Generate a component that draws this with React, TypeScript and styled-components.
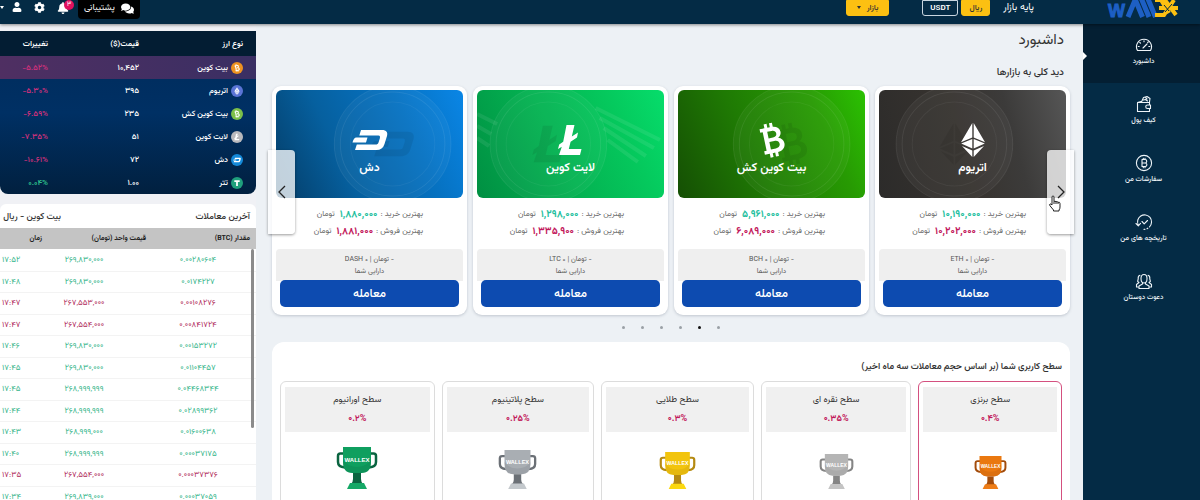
import React from "react";
import styled, { createGlobalStyle, css } from "styled-components";
import { FaBell, FaCog, FaComments, FaUser } from "react-icons/fa";

const GlobalStyle = createGlobalStyle`
  *, *::before, *::after { box-sizing: border-box; }
  body {
    margin: 0;
    background: #edf1f5;
    color: #333;
    font-family: Vazirmatn, "DejaVu Sans Condensed", "Noto Sans", sans-serif;
    font-size: 8px;
    line-height: 12px;
  }
  button { font-family: inherit; cursor: pointer; }
  h1, h2, p, ul { margin: 0; padding: 0; }
`;

const Shell = styled.div`
  height: 100vh;
  display: flex;
  flex-direction: column;
  overflow: hidden;
`;

/* ---------- top bar ---------- */

const TopBar = styled.header`
  position: relative;
  z-index: 2;
  display: flex;
  align-items: flex-start;
  justify-content: space-between;
  height: 24px;
  flex: none;
  background: #042b45;
  box-shadow: 0 1px 3px rgba(0, 0, 0, 0.45);
`;

const BarGroup = styled.div`
  display: flex;
  align-items: flex-start;
`;

const Brand = styled.a`
  display: block;
  height: 18px;
  margin-right: 22px;
  margin-left: 73px;
`;

const BaseLabel = styled.span`
  color: #fff;
  font-size: 10px;
  line-height: 16px;
  margin-left: 13px;
`;

const BarButton = styled.button<{ $outline?: boolean }>`
  height: 16px;
  padding: 0 7px;
  border: 1px solid ${(p) => (p.$outline ? "#c9d6e0" : "#fcc012")};
  border-radius: 0 0 3px 3px;
  background: ${(p) => (p.$outline ? "transparent" : "#fcc012")};
  color: ${(p) => (p.$outline ? "#fff" : "#333")};
  font-size: 8px;
  line-height: 12px;
  font-weight: ${(p) => (p.$outline ? 600 : 500)};
  margin-left: 3px;
`;

const MarketButton = styled(BarButton)`
  margin-right: 30px;
  padding: 0 10px;
`;

const Caret = styled.span`
  display: inline-block;
  border: 2px solid transparent;
  border-top: 3px solid currentColor;
  border-bottom: 0;
  margin-right: 6px;
  vertical-align: middle;
`;

const SupportButton = styled.button`
  display: flex;
  align-items: center;
  gap: 6px;
  height: 19px;
  margin-left: -3px;
  padding: 0 6px 3px 6px;
  border: 0;
  border-radius: 0 0 4px 4px;
  background: #000;
  color: #fff;
  font-size: 9px;
  line-height: 12px;
`;

const IconButton = styled.button`
  position: relative;
  display: flex;
  padding: 2px 0 0;
  border: 0;
  background: none;
  color: #fff;
`;

const Tools = styled(BarGroup)`
  gap: 12px;
`;

const AccountButton = styled(IconButton)`
  gap: 8px;
  align-items: center;
  & > ${Caret} { margin: 0; }
`;

const Badge = styled.span`
  position: absolute;
  top: 0;
  left: 7px;
  width: 10px;
  height: 10px;
  border-radius: 50%;
  background: #e0115f;
  color: #fff;
  font-size: 7px;
  line-height: 10px;
  text-align: center;
`;

/* ---------- page columns ---------- */

const Columns = styled.div`
  flex: 1;
  min-height: 0;
  display: grid;
  grid-template-columns: 117px minmax(0, 1fr) 256px;
`;

const SideNav = styled.nav`
  background: #042b45;
`;

const NavLink = styled.a<{ $active?: boolean }>`
  position: relative;
  display: flex;
  flex-direction: column;
  align-items: center;
  gap: 2px;
  height: 59px;
  padding: 12px 0 0 4px;
  color: #eef4f8;
  font-size: 7px;
  font-weight: 500;
  line-height: 12px;
  text-decoration: none;
  background: ${(p) => (p.$active ? "#041f33" : "transparent")};
  ${(p) =>
    p.$active &&
    css`
      &::before {
        content: "";
        position: absolute;
        left: 0;
        top: 28px;
        border: 4px solid transparent;
        border-left-color: #fff;
        border-right: 0;
      }
    `}
`;

const Main = styled.main`
  padding: 7px 13px 0 16px;
  overflow: hidden;
`;

const Title = styled.h1`
  padding-right: 6px;
  color: #333;
  font-size: 15px;
  font-weight: 400;
  line-height: 20px;
`;

const Section = styled.h2`
  padding-right: 6px;
  color: #333;
  font-size: 10px;
  font-weight: 500;
  line-height: 12px;
  margin-top: 16px;
`;

/* ---------- market slider ---------- */

const Slider = styled.div`
  position: relative;
  display: grid;
  grid-template-columns: repeat(4, minmax(0, 1fr));
  gap: 6px;
  margin-top: 7px;
`;

const MarketCard = styled.article`
  padding: 4px 4px 8px;
  border-radius: 9px;
  background: #fff;
  box-shadow: 0 1px 3px rgba(80, 90, 110, 0.28);
`;

const Cover = styled.div<{ $bg: string }>`
  position: relative;
  display: flex;
  flex-direction: column;
  align-items: center;
  gap: 2px;
  height: 108px;
  padding-top: 32px;
  border-radius: 6px;
  overflow: hidden;
  background: ${(p) => p.$bg};
  color: #fff;
  font-size: 12px;
  font-weight: 600;
  line-height: 16px;
`;

const CoverArt = styled.svg`
  position: absolute;
  inset: 0;
  width: 100%;
  height: 100%;
`;

const Layer = styled.span`
  position: relative;
  display: flex;
`;

const Prices = styled.div`
  padding: 8px 40px 0 0;
`;

const PriceLine = styled.p`
  display: flex;
  gap: 3px;
  color: #666;
  font-size: 8px;
  line-height: 17px;
  white-space: nowrap;
`;

const Amount = styled.strong<{ $up?: boolean }>`
  color: ${(p) => (p.$up ? "#1fbfa0" : "#c2185b")};
  font-size: 10px;
  font-weight: 700;
  margin-left: 2px;
`;

const Asset = styled.div`
  margin-top: 9px;
  padding: 5px 0 3px;
  border-radius: 4px 4px 0 0;
  background: #efefef;
  color: #555;
  font-size: 7px;
  line-height: 12px;
  text-align: center;
`;

const TradeButton = styled.button`
  position: relative;
  display: block;
  width: calc(100% - 8px);
  height: 27px;
  margin: -1px 4px 0;
  border: 0;
  border-radius: 5px;
  background: #0d4bb0;
  color: #fff;
  font-size: 12px;
  font-weight: 500;
  line-height: 24px;
`;

const Arrow = styled.button<{ $side: "left" | "right" }>`
  position: absolute;
  top: 64px;
  ${(p) => p.$side}: -4px;
  display: flex;
  align-items: center;
  justify-content: center;
  width: 27px;
  height: 84px;
  padding: 0;
  border: 0;
  border-radius: ${(p) => (p.$side === "left" ? "0 4px 4px 0" : "4px 0 0 4px")};
  background: rgba(255, 255, 255, 0.76);
  box-shadow: 0 1px 3px rgba(0, 0, 0, 0.4);
`;

const Pointer = styled.svg`
  position: absolute;
  right: 8px;
  top: 109px;
`;

const Dots = styled.div`
  display: flex;
  justify-content: center;
  gap: 16px;
  margin: 11px 0 13px;
`;

const Dot = styled.button<{ $on?: boolean }>`
  width: 3px;
  height: 3px;
  padding: 0;
  border: 0;
  border-radius: 50%;
  background: ${(p) => (p.$on ? "#111" : "#9aa0a6")};
`;

/* ---------- user levels ---------- */

const Levels = styled.section`
  padding: 19px 8px 0;
  border-radius: 12px;
  background: #fff;
`;

const LevelsTitle = styled.h2`
  color: #333;
  font-size: 9px;
  font-weight: 600;
  line-height: 12px;
`;

const LevelGrid = styled.div`
  display: grid;
  grid-template-columns: 144fr 151fr 153fr 153fr 155fr;
  gap: 7px;
  margin-top: 8px;
`;

const LevelCard = styled.article<{ $current?: boolean }>`
  display: flex;
  flex-direction: column;
  height: 150px;
  padding: 5px 4px;
  border: 1px solid ${(p) => (p.$current ? "#d4507f" : "#dcdcdc")};
  border-radius: 6px;
  background: #fff;
`;

const LevelHead = styled.div`
  height: 45px;
  padding-top: 4px;
  background: #f0f0f0;
  color: #333;
  font-size: 9px;
  line-height: 19px;
  text-align: center;
`;

const Rate = styled.p`
  color: #c2185b;
  font-weight: 700;
`;

const CupBox = styled.div`
  display: flex;
  align-items: flex-end;
  justify-content: center;
  height: 57px;
`;

/* ---------- left column ---------- */

const Aside = styled.aside`
  padding-top: 7px;
  display: flex;
  flex-direction: column;
  gap: 10px;
  background: #f0f1f5;
  overflow: hidden;
`;

const RatesTable = styled.table`
  width: 100%;
  table-layout: fixed;
  border-collapse: collapse;
  border-radius: 0 0 8px 8px;
  overflow: hidden;
  background: linear-gradient(#002b5a, #003064 50%, #01203f);
  color: #fff;
  font-size: 8px;
  line-height: 12px;

  th, td {
    height: 23px;
    padding: 0;
    text-align: right;
    font-weight: 500;
    white-space: nowrap;
  }
  th { height: 25px; background: #031d33; font-weight: 600; }
  th:nth-child(1) { width: 117px; padding-right: 13px; }
  th:nth-child(2) { width: 91px; }
  td:nth-child(1) { padding-right: 13px; }
`;

const RateRow = styled.tr<{ $hot?: boolean }>`
  background: ${(p) => (p.$hot ? "linear-gradient(90deg, #4f2f62, #3a2f63)" : "transparent")};
`;

const CoinName = styled.span`
  display: flex;
  align-items: center;
  gap: 3px;
`;

const Num = styled.bdi<{ $tone?: string }>`
  color: ${(p) => p.$tone ?? "inherit"};
`;

const Trades = styled.section`
  position: relative;
  border-radius: 6px 6px 0 0;
  background: #fff;
`;

const TradesHead = styled.div`
  display: flex;
  height: 24px;
  padding: 6px 6px 0 0;
  color: #333;
  font-size: 9px;
  line-height: 14px;
  font-weight: 500;

  & > h2 { width: 189px; font-size: 9px; font-weight: 500; }
`;

const TradesTable = styled.table`
  width: 100%;
  table-layout: fixed;
  border-collapse: collapse;
  font-size: 8px;
  line-height: 12px;

  th, td { padding: 0; white-space: nowrap; }
  th {
    height: 21px;
    background: #c4c4c4;
    color: #222;
    font-size: 7px;
    font-weight: 700;
    text-align: right;
  }
  th:nth-child(1) { width: 110px; padding-right: 6px; }
  th:nth-child(2) { width: 104px; }
  td { height: 22px; border-bottom: 1px solid #f3f3f3; text-align: center; }
  tr:nth-child(even) td { height: 21px; }
  td:nth-child(1) { padding-right: 6px; }
  td:nth-child(2) { padding-right: 20px; }
  td:nth-child(3) { padding-left: 2px; text-align: left; }
`;

const TradeRow = styled.tr<{ $sell?: boolean }>`
  color: ${(p) => (p.$sell ? "#b02a5b" : "#35b58a")};
`;

const ScrollThumb = styled.span`
  position: absolute;
  top: 45px;
  right: 2px;
  width: 3px;
  height: 179px;
  border-radius: 2px;
  background: #8b8b8b;
`;

/* ---------- drawings ---------- */

const Logo = () => (
  <svg width="71" height="18" viewBox="0 0 71 18" aria-hidden="true">
    <text x="1" y="17" direction="ltr" fontFamily="Liberation Sans" fontWeight="700" fontSize="18" fill="#1d5fc4" stroke="#1d5fc4" strokeWidth="1">
      W
    </text>
    <g stroke="#1d5fc4" strokeWidth="5">
      <path d="M21 17 28.500 -1M28 -1 35.500 17M34.500 -1 42 17M41 -1 48.500 17" />
    </g>
    <g stroke="#fcc012" strokeWidth="4" fill="none">
      <path d="M48 0H58L69 15M52 8H71M48 15H57L67 0M54 0 62 13" />
    </g>
    <path d="M57 5 62 11M65 4 58 12" stroke="#042b45" strokeWidth="1" />
  </svg>
);

const line = { fill: "none", stroke: "#eef4f8", strokeWidth: 1.1, strokeLinecap: "round", strokeLinejoin: "round" } as const;

const NavIcon = ({ name }: { name: string }) => (
  <svg width="18" height="18" viewBox="0 0 18 18" {...line}>
    {name === "dash" && (
      <path d="M2.500 14.500A7.500 7.500 0 1 1 15.500 14.500ZM8 12 12 8M9 4.800V5.800M4.800 6.500 5.500 7.200M3.200 10.500H4.200M13.800 10.500H14.800M12.600 6.600 13.200 6" />
    )}
    {name === "wallet" && (
      <path d="M2.500 8V16.500H14.500V13.500M14.500 10V7.500H2.500L6 6.500M12.500 10H15.500V13.500H12.500A1.700 1.700 0 0 1 12.500 10ZM6.500 7 8.500 2.500 12 1.500 15 3.500 14.500 7M8.500 5 10.500 4.500 12.500 6M10.500 2.500 12 4" />
    )}
    {name === "coin" && (
      <>
        <circle cx="9" cy="9" r="7.600" />
        <path d="M7 5.500H10A1.700 1.700 0 0 1 10 9H7H10.500A1.800 1.800 0 0 1 10.500 12.500H7ZM8.300 4.300V5.500M10 4.300V5.500M8.300 12.500V13.700M10 12.500V13.700" />
      </>
    )}
    {name === "history" && <path d="M3.300 12A7 7 0 1 1 14.500 13.800M12.800 15.200 12 15.700M10 16.300 9 16.400M1 10.500 3.300 12.800 5.500 10.300M7 8.500 9.200 10.800 12.500 7.500" />}
    {name === "friends" && (
      <>
        <path d="M9 2.500C6.800 2.500 6 4.200 6 6.500S7.200 11 9 11 12 9 12 6.500 11.200 2.500 9 2.500Z" />
        <path d="M7.500 10.800V12L4 14V16.500H14V14L10.500 12V10.800M5 3.300C3.500 3.500 3 5 3.200 7L2.600 9.300 4 10.500 1.500 12.500V15H3M13 3.300C14.500 3.500 15 5 14.800 7L15.400 9.300 14 10.500 16.500 12.500V15H15" />
      </>
    )}
  </svg>
);

const CoinMark = ({ kind, size, ...rest }: { kind: string; size: number; x?: number; y?: number; opacity?: number; fill?: string }) => (
  <svg width={size} height={size} viewBox="0 0 36 36" fill="#fff" stroke="none" {...rest}>
    {kind === "eth" && (
      <path d="M17.300 1V15.500L6 20.200ZM18.700 1V15.500L30 20.200ZM17.300 17V26.500L6.200 21.600ZM18.700 17V26.500L29.800 21.600ZM17.300 28.500V35L7 24ZM18.700 28.500V35L29 24Z" />
    )}
    {kind === "btc" && (
      <g transform="rotate(-12 18 18)">
        <path
          fillRule="evenodd"
          d="M8 5H13V1H16V5H18.500V1H21.500V5.200C25.500 5.800 28 8.200 28 11.500 28 14 26.800 16 24.500 17 27.700 18 29.500 20.400 29.500 23.500 29.500 28 26.300 30.700 21.500 31V35H18.500V31H16V35H13V31H8V27.500H10.500V8.500H8ZM15 9V15.800H19.500C22 15.800 23.500 14.600 23.500 12.400 23.500 10.200 22 9 19.500 9ZM15 19.400V27H20C23 27 24.700 25.600 24.700 23.200 24.700 20.800 23 19.400 20 19.400Z"
        />
      </g>
    )}
    {kind === "ltc" && <path d="M13.500 3H21.500L18.800 14.500 25 10.500 24 15.500 17.600 19.700 15.800 27H28.500L27 33H6L8.800 24.800 5 27 6.200 22.500 10.200 19.700Z" />}
    {kind === "dash" && (
      <path d="M9 8H30C34.500 8 36 10.500 35 14L32.500 22C31.300 26 28.500 28 24.500 28H3L4.800 22.500H23.500C25.300 22.500 26 22 26.500 20.500L27.800 16.500C28.300 14.700 28 13.500 26.500 13.500H7.300ZM4.500 15.500H15.500L14 20.500H0.500C1.300 17.500 2.300 15.500 4.500 15.500Z" />
    )}
    {kind === "usdt" && <path d="M6 6H30V13H22V31H14V13H6Z" />}
  </svg>
);

const CoinDisc = styled.span<{ $bg: string }>`
  display: flex;
  align-items: center;
  justify-content: center;
  width: 12px;
  height: 12px;
  border-radius: 50%;
  background: ${(p) => p.$bg};
`;

const Cup = ({ size, light, mid, dark }: { size: number; light: string; mid: string; dark: string }) => (
  <svg width={size} height={size} viewBox="0 0 42 42">
    <path d="M8 6.500H4.500Q2 6.500 2 9V15Q2 20 9 20.500M34 6.500H37.500Q40 6.500 40 9V15Q40 20 33 20.500" fill="none" stroke={dark} strokeWidth="2.500" />
    <path d="M7 0H35V15Q35 26 25.500 26H16.500Q7 26 7 15Z" fill={mid} />
    <path d="M7 13Q7 26 16.500 26H25.500Q35 26 35 13Q30 20 21 20T7 13Z" fill={dark} opacity="0.2" />
    <path d="M17 26H25V32Q25 35 27 37H15Q17 35 17 32Z" fill={dark} />
    <path d="M14 36H28L31 42H11Z" fill={light} />
    <text x="21" y="15" textAnchor="middle" fontFamily="Liberation Sans" fontSize="6" fontWeight="700" fill="#fff" direction="ltr">
      WALLEX
    </text>
  </svg>
);

/* ---------- data ---------- */

const NAV = [
  { icon: "dash", label: "داشبورد" },
  { icon: "wallet", label: "کیف پول" },
  { icon: "coin", label: "سفارشات من" },
  { icon: "history", label: "تاریخچه های من" },
  { icon: "friends", label: "دعوت دوستان" },
];

const MARKETS = [
  { kind: "eth", name: "اتریوم", code: "ETH", buy: "۱۰,۱۹۰,۰۰۰", sell: "۱۰,۲۰۲,۰۰۰", bg: "linear-gradient(75deg, #2c2b2a, #37332f 45%, #3c3b3a 70%, #565656)", ring: 75 },
  { kind: "btc", name: "بیت کوین کش", code: "BCH", buy: "۵,۹۶۱,۰۰۰", sell: "۶,۰۸۹,۰۰۰", bg: "linear-gradient(65deg, #154f04, #1f7a04 40%, #279a03 75%, #2bc202)", ring: 113 },
  { kind: "ltc", name: "لایت کوین", code: "LTC", buy: "۱,۲۹۸,۰۰۰", sell: "۱,۳۳۵,۹۰۰", bg: "linear-gradient(65deg, #008f42, #04b352 45%, #05c95d 75%, #06dd6b)", ring: 71 },
  { kind: "dash", name: "دش", code: "DASH", buy: "۱,۸۸۰,۰۰۰", sell: "۱,۸۸۱,۰۰۰", bg: "linear-gradient(65deg, #043c66, #06609f 35%, #0672c2 70%, #0a86e6)", ring: 116 },
];

const LEVELS = [
  { name: "سطح برنزی", rate: "۰.۴%", size: 33, light: "#ee7d17", mid: "#ea780f", dark: "#a34c0b", current: true },
  { name: "سطح نقره ای", rate: "۰.۳۵%", size: 35, light: "#c4c4c4", mid: "#b5b5b5", dark: "#858585" },
  { name: "سطح طلایی", rate: "۰.۳%", size: 37, light: "#fbd810", mid: "#f2c40d", dark: "#b58a12" },
  { name: "سطح پلاتینیوم", rate: "۰.۲۵%", size: 39, light: "#c3c8cc", mid: "#a9aeb3", dark: "#6b7076" },
  { name: "سطح اورانیوم", rate: "۰.۲%", size: 42, light: "#15a866", mid: "#0f9f5f", dark: "#0a6440" },
];

const RATES = [
  { kind: "btc", name: "بیت کوین", price: "۱۰,۴۵۲", change: "-۵.۵۲%", bg: "#ee9220" },
  { kind: "eth", name: "اتریوم", price: "۳۹۵", change: "-۵.۳۰%", bg: "#5a74d6" },
  { kind: "btc", name: "بیت کوین کش", price: "۲۳۵", change: "-۶.۵۹%", bg: "#7cc04a" },
  { kind: "ltc", name: "لایت کوین", price: "۵۱", change: "-۷.۳۵%", bg: "#b9b9bd" },
  { kind: "dash", name: "دش", price: "۷۲", change: "-۱۰.۶۱%", bg: "#1489d8" },
  { kind: "usdt", name: "تتر", price: "۱.۰۰", change: "۰.۰۴%", bg: "#1f9f7c", up: true },
];

const TRADES = [
  { amount: "۰.۰۰۲۸۰۶۰۴", price: "۲۶۹,۸۳۰,۰۰۰", time: "۱۷:۵۲" },
  { amount: "۰.۰۱۷۴۲۲۷", price: "۲۶۹,۸۳۰,۰۰۰", time: "۱۷:۴۸" },
  { amount: "۰.۰۰۱۰۸۲۷۶", price: "۲۶۷,۵۵۳,۰۰۰", time: "۱۷:۴۷", sell: true },
  { amount: "۰.۰۰۸۴۱۷۲۴", price: "۲۶۷,۵۵۴,۰۰۰", time: "۱۷:۴۷", sell: true },
  { amount: "۰.۰۰۱۵۳۲۷۲", price: "۲۶۹,۸۳۰,۰۰۰", time: "۱۷:۴۶" },
  { amount: "۰.۰۱۱۰۴۴۵۷", price: "۲۶۹,۸۳۰,۰۰۰", time: "۱۷:۴۵" },
  { amount: "۰.۰۴۴۶۸۳۴۴", price: "۲۶۸,۹۹۹,۹۹۹", time: "۱۷:۴۵" },
  { amount: "۰.۰۲۸۹۹۳۶۲", price: "۲۶۸,۹۹۹,۹۹۹", time: "۱۷:۴۴" },
  { amount: "۰.۰۱۶۰۰۶۳۸", price: "۲۶۸,۹۹۹,۰۰۰", time: "۱۷:۴۳" },
  { amount: "۰.۰۰۰۳۷۱۷۵", price: "۲۶۸,۹۹۹,۹۹۹", time: "۱۷:۴۰" },
  { amount: "۰.۰۰۰۳۷۳۷۶", price: "۲۶۷,۵۵۴,۰۰۰", time: "۱۷:۳۵", sell: true },
  { amount: "۰.۰۰۰۳۷۰۵۹", price: "۲۶۹,۸۳۹,۰۰۰", time: "۱۷:۳۴" },
];

export default function App() {
  return (
    <Shell dir="rtl" lang="fa">
      <GlobalStyle />
      <TopBar>
        <BarGroup>
          <Brand href="#" aria-label="Wallex">
            <Logo />
          </Brand>
          <BaseLabel>پایه بازار</BaseLabel>
          <BarButton>ریال</BarButton>
          <BarButton $outline>USDT</BarButton>
          <MarketButton>
            بازار
            <Caret />
          </MarketButton>
        </BarGroup>
        <Tools>
          <SupportButton>
            <FaComments size={13} />
            پشتیبانی
          </SupportButton>
          <IconButton aria-label="اعلان‌ها">
            <FaBell size={12} />
            <Badge>۳</Badge>
          </IconButton>
          <IconButton aria-label="تنظیمات">
            <FaCog size={11} />
          </IconButton>
          <AccountButton aria-label="حساب کاربری">
            <FaUser size={10} />
            <Caret />
          </AccountButton>
        </Tools>
      </TopBar>

      <Columns>
        <SideNav>
          {NAV.map((n, i) => (
            <NavLink key={n.icon} href="#" $active={i === 0}>
              <NavIcon name={n.icon} />
              {n.label}
            </NavLink>
          ))}
        </SideNav>

        <Main>
          <Title>داشبورد</Title>
          <Section>دید کلی به بازارها</Section>
          <Slider>
            {MARKETS.map((m) => (
              <MarketCard key={m.code}>
                <Cover $bg={m.bg}>
                  <CoverArt viewBox="0 0 186 108" preserveAspectRatio="none" fill="none" stroke="#fff" strokeOpacity="0.08">
                    <circle cx={m.ring} cy="54" r="58" fill="#fff" fillOpacity="0.04" />
                    <circle cx={m.ring} cy="54" r="52" />
                    <circle cx={m.ring} cy="54" r="42" strokeOpacity="0.05" />
                    <CoinMark kind={m.kind} size={44} x={m.ring - 22} y={32} opacity={0.07} fill="#000" />
                    {m.kind === "ltc" && <path d="M118 18 182 50M122 28 176 58M126 38 168 66M130 50 160 72M0 24 20 34M0 36 14 44M0 48 12 56" strokeWidth="4" />}
                  </CoverArt>
                  <Layer>
                    <CoinMark kind={m.kind} size={36} />
                  </Layer>
                  <Layer>{m.name}</Layer>
                </Cover>
                <Prices>
                  <PriceLine>
                    بهترین خرید : <Amount $up>{m.buy}</Amount> تومان
                  </PriceLine>
                  <PriceLine>
                    بهترین فروش : <Amount>{m.sell}</Amount> تومان
                  </PriceLine>
                </Prices>
                <Asset>
                  <p>- تومان | ۰ {m.code}</p>
                  <p>دارایی شما</p>
                </Asset>
                <TradeButton>معامله</TradeButton>
              </MarketCard>
            ))}
            <Arrow $side="right" aria-label="قبلی">
              <svg width="10" height="14" viewBox="0 0 10 14" fill="none" stroke="#222" strokeWidth="1.300">
                <path d="M2 1 8 7 2 13" />
              </svg>
            </Arrow>
            <Arrow $side="left" aria-label="بعدی">
              <svg width="10" height="14" viewBox="0 0 10 14" fill="none" stroke="#222" strokeWidth="1.300">
                <path d="M8 1 2 7 8 13" />
              </svg>
            </Arrow>
            <Pointer width="14" height="17" viewBox="0 0 14 17" fill="#fff" stroke="#222" strokeWidth="1" strokeLinejoin="round">
              <path d="M4 9V2Q4 1 5 1T6 2V6.500Q7 5.500 8 6.800 9 6 10 7.300 12 6.800 12 8.500V12Q12 14 11 15V16H5.500V15L2 10.800Q1 9.500 2 9T4 10Z" />
              <path d="M6 6.500V9M8 6.800V9M10 7.300V9" />
            </Pointer>
          </Slider>
          <Dots>
            {[0, 1, 2, 3, 4, 5].map((i) => (
              <Dot key={i} $on={i === 1} aria-label={`اسلاید ${i + 1}`} />
            ))}
          </Dots>
          <Levels>
            <LevelsTitle>سطح کاربری شما (بر اساس حجم معاملات سه ماه اخیر)</LevelsTitle>
            <LevelGrid>
              {LEVELS.map((l) => (
                <LevelCard key={l.name} $current={l.current}>
                  <LevelHead>
                    <p>{l.name}</p>
                    <Rate>
                      <bdi dir="ltr">{l.rate}</bdi>
                    </Rate>
                  </LevelHead>
                  <CupBox>
                    <Cup size={l.size} light={l.light} mid={l.mid} dark={l.dark} />
                  </CupBox>
                </LevelCard>
              ))}
            </LevelGrid>
          </Levels>
        </Main>

        <Aside>
          <RatesTable>
            <thead>
              <tr>
                <th>نوع ارز</th>
                <th>قیمت($)</th>
                <th>تغییرات</th>
              </tr>
            </thead>
            <tbody>
              {RATES.map((r, i) => (
                <RateRow key={r.name} $hot={i === 0}>
                  <td>
                    <CoinName>
                      <CoinDisc $bg={r.bg}>
                        <CoinMark kind={r.kind} size={8} />
                      </CoinDisc>
                      {r.name}
                    </CoinName>
                  </td>
                  <td>
                    <Num dir="ltr">{r.price}</Num>
                  </td>
                  <td>
                    <Num dir="ltr" $tone={r.up ? "#2fc48f" : "#d0317c"}>
                      {r.change}
                    </Num>
                  </td>
                </RateRow>
              ))}
            </tbody>
          </RatesTable>
          <Trades>
            <TradesHead>
              <h2>آخرین معاملات</h2>
              <span>بیت کوین - ریال</span>
            </TradesHead>
            <TradesTable>
              <thead>
                <tr>
                  <th>مقدار (BTC)</th>
                  <th>قیمت واحد (تومان)</th>
                  <th>زمان</th>
                </tr>
              </thead>
              <tbody>
                {TRADES.map((t, i) => (
                  <TradeRow key={i} $sell={t.sell}>
                    <td>
                      <Num dir="ltr">{t.amount}</Num>
                    </td>
                    <td>
                      <Num dir="ltr">{t.price}</Num>
                    </td>
                    <td>
                      <Num dir="ltr">{t.time}</Num>
                    </td>
                  </TradeRow>
                ))}
              </tbody>
            </TradesTable>
            <ScrollThumb />
          </Trades>
        </Aside>
      </Columns>
    </Shell>
  );
}
